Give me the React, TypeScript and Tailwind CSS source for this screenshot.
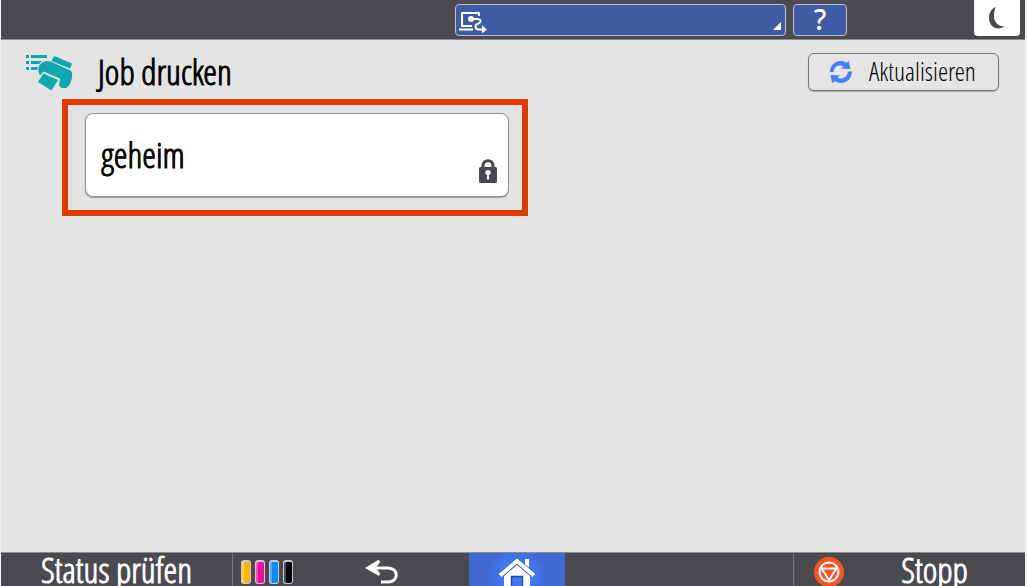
import type { ReactNode } from "react";

function RemotePanelIcon() {
  return (
    <svg viewBox="0 0 28 22" className="h-[22px] w-7" fill="none" stroke="#fff" strokeWidth="2" aria-hidden="true">
      <path d="M20 5V2H3v13h10" />
      <path d="M0 18.500h14" />
      <path d="M12 8h6c5 0 4 3.500 1.500 4.500-4 1-4 6 .5 6h3" />
      <circle cx="12" cy="8" r="3" fill="#fff" stroke="none" />
      <path d="M23 14.500v8l5-4z" fill="#fff" stroke="none" />
    </svg>
  );
}

function MoonIcon() {
  return (
    <svg viewBox="0 0 18 24" className="h-6 w-[18px]" aria-hidden="true">
      <path d="M8 1C3 3 1 7 1 12c0 6 4 10.500 9 10.500 3 0 5-1 6.500-2.500C10 21 6 16 6 10c0-4 .5-7 2-9z" fill="#4a494d" />
    </svg>
  );
}

function PrintJobIcon() {
  return (
    <svg viewBox="0 0 48 38" className="h-[38px] w-12" fill="#0fa8ad" aria-hidden="true">
      <path d="M0 1h3v3H0zM5 1h16v3H5zM0 7h3v3H0zM5 7h11l-3 3H5zM0 13h3v3H0zM5 13h7l-1 3H5z" />
      <path d="M27.500 3q.8-1 2-.5L45 9q1.200.6.700 1.700L44 14.500 25.500 7z" />
      <path d="M12.500 14c1-4 4-6.500 8-7l4 .5L44.500 16.500q2 1 1.700 4.500C46 26 44 31.500 41 33.500c-2 1-4.500.8-6.500-.2L33 31.500l1-7L17.500 17.500l-3.500 4c-1.500-3-2-5-1.500-7.500z" />
      <path d="M17.500 19.500L32 26 25.500 36.500 12 28z" />
    </svg>
  );
}

function RefreshIcon() {
  return (
    <svg viewBox="0 0 24 24" className="h-6 w-6 shrink-0" fill="#4680f7" aria-hidden="true">
      <path d="M1 12C1 5.500 6 1 11.500 1c2.200 0 4.500.6 6 1.700L19.500 1 21.500 9l-9.500-.5 2.500-2C10 4 5 6.500 4.500 12z" />
      <path d="M23 11.500C23 18 18 23 12.500 23c-2.200 0-4.500-.6-6-1.700L3 23 1.500 15l9.500.5-2.500 2C13 20 18 17.500 19 11.500z" />
    </svg>
  );
}

function LockIcon() {
  return (
    <svg viewBox="0 0 18 24" className="h-6 w-[18px]" aria-hidden="true">
      <path d="M4 9V6.500C4 0 14 0 14 6.500V9" fill="none" stroke="#49484d" strokeWidth="3" />
      <rect y="8" width="18" height="16" rx="1.500" fill="#49484d" />
      <circle cx="9" cy="13.500" r="2.600" fill="#fff" />
      <path d="M8.200 14h1.600l.4 6.500H7.800z" fill="#fff" />
    </svg>
  );
}

function BackIcon() {
  return (
    <svg viewBox="0 0 34 26" className="h-[26px] w-[34px]" aria-hidden="true">
      <path d="M8 9h15c11 0 11 14 0 14h-7" fill="none" stroke="#fff" strokeWidth="3" />
      <path d="M0 9l14-8.500 1 3L10.500 9l4.500 5-1 3z" fill="#fff" />
    </svg>
  );
}

function HomeIcon() {
  return (
    <svg viewBox="0 0 40 30" className="h-[30px] w-10" aria-hidden="true">
      <path d="M28 2h4v13l-4-4z" fill="#fff" />
      <path d="M7 19L20 8l13 11v11H7z" fill="#fff" />
      <path d="M20 1L1 17l3.500 3.500L20 7l15.500 13.500L39 17z" fill="#fff" stroke="#35529f" strokeWidth=".8" />
      <path d="M14.500 30V19.500h11V30" fill="#3f78f5" stroke="#294b9d" strokeWidth="1.500" />
    </svg>
  );
}

function StopIcon() {
  return (
    <svg viewBox="0 0 30 30" className="h-[30px] w-[30px]" fill="none" stroke="#fff" strokeWidth="2" aria-hidden="true">
      <circle cx="15" cy="15" r="15" fill="#fc5320" stroke="none" />
      <circle cx="15" cy="15" r="9.500" />
      <path d="M7.500 11.500h15L15 23z" strokeLinejoin="round" />
    </svg>
  );
}

function Toner({ color }: { color: string }) {
  return (
    <span className={`h-6 w-2.5 rounded-[3px] border border-t-2 border-[#c9c9c9] ${color}`}>
      <span className="block h-full w-0.5 bg-white/30" />
    </span>
  );
}

function BarButton({ label, className, children }: { label?: string; className: string; children: ReactNode }) {
  return (
    <button type="button" aria-label={label} className={`flex h-full min-w-0 ${className}`}>
      {children}
    </button>
  );
}

export default function App() {
  return (
    <div className="flex h-screen flex-col overflow-hidden border-r-2 border-l border-[#f0f0f0] bg-[#e4e4e4] font-['Open_Sans_Condensed_Light','Roboto_Condensed',sans-serif] text-black [-webkit-text-stroke:1px]">
      <header className="flex h-10 shrink-0 justify-end border-b border-[#8b8b8e] bg-[#4b4a4f] pr-[5px]">
        <button type="button" aria-label="Anmeldung" className="mt-1 flex h-8 w-[331px] items-end justify-between rounded border border-[#c2c4cc] bg-[#3f5ba4] pr-1 pl-[3px]">
          <span className="pb-0.5"><RemotePanelIcon /></span>
          <svg viewBox="0 0 8 8" className="mb-[5px] h-2 w-2" aria-hidden="true"><path d="M8 0v8H0z" fill="#fff" /></svg>
        </button>
        <button type="button" className="mt-1 ml-[7px] flex h-8 w-[54px] items-center justify-center rounded border border-[#c2c4cc] bg-[#3f5ba4] pb-0.5 font-['Noto_Sans',sans-serif] text-[28px] leading-7 font-medium text-white [-webkit-text-stroke:0]">?</button>
        <button type="button" aria-label="Energiesparmodus" className="ml-[127px] flex h-9 w-[46px] items-center justify-center rounded-b-sm bg-white">
          <MoonIcon />
        </button>
      </header>

      <main className="min-h-0 flex-1">
        <div className="flex h-[59px] items-start justify-between pr-[26px] pl-[25px]">
          <div className="flex items-start gap-6 pt-3.5">
            <PrintJobIcon />
            <h1 className="text-[35px] leading-9">Job drucken</h1>
          </div>
          <button type="button" className="mt-[13px] flex h-[38px] w-[191px] items-center rounded-md border border-[#77777a] bg-[#e5e5e5] pl-5 shadow-[0_1px_1px_#aaa]">
            <RefreshIcon />
            <span className="ml-4 pb-0.5 text-[26px] leading-8 [-webkit-text-stroke:0]">Aktualisieren</span>
          </button>
        </div>
        <div className="ml-[61px] w-[466px] border-[6px] border-[#df3b00] pt-2 pr-[13px] pb-[13px] pl-[17px]">
          <button type="button" className="flex h-[84px] w-full items-center justify-between rounded-lg border border-[#929294] bg-white pr-[11px] pl-[15px] shadow-[0_1px_1px_#999]">
            <span className="text-[35px] leading-9">geheim</span>
            <span className="self-end pb-[13px]"><LockIcon /></span>
          </button>
        </div>
      </main>

      <footer className="grid h-[34px] shrink-0 grid-cols-[231fr_74fr_163fr_96fr_228fr_232fr] overflow-hidden border-t border-[#8b8b8e] bg-[#4b4a4f] text-white">
        <BarButton className="items-center justify-center">
          <span className="text-[35px] leading-8">Status prüfen</span>
        </BarButton>
        <BarButton label="Tonerstand" className="gap-1 border-l border-[#77777a] pt-[7px] pl-2">
          <Toner color="bg-[#fdb400]" />
          <Toner color="bg-[#f304a5]" />
          <Toner color="bg-[#078cff]" />
          <Toner color="bg-black" />
        </BarButton>
        <BarButton label="Zurück" className="items-start pt-1.5 pl-[59px]">
          <BackIcon />
        </BarButton>
        <BarButton label="Startseite" className="items-start justify-center bg-[#416ad0] bg-[radial-gradient(circle_at_50%_70%,#3c7cff_25%,#416ad0_55%)] pt-1">
          <HomeIcon />
        </BarButton>
        <span />
        <BarButton className="items-center border-l border-[#77777a] pl-5">
          <span className="self-start pt-1"><StopIcon /></span>
          <span className="flex-1 text-center text-[35px] leading-8">Stopp</span>
        </BarButton>
      </footer>
    </div>
  );
}
